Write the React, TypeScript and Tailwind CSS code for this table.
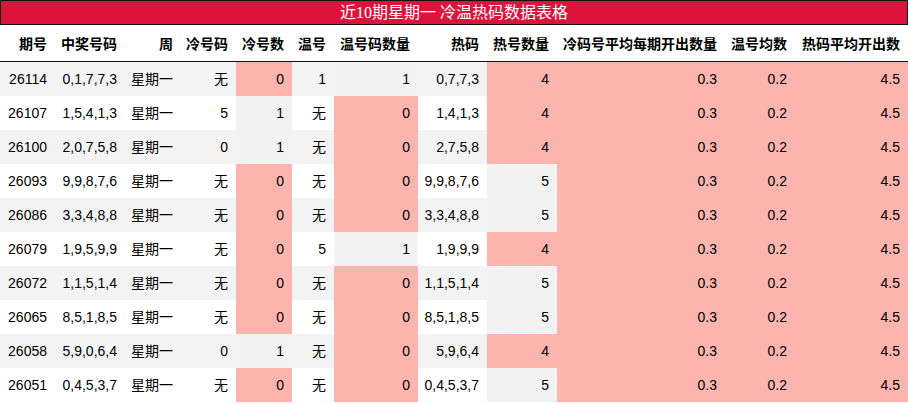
import React from "react";

const cols =
  "grid grid-cols-[55px_70px_56px_55px_56px_42px_84px_69px_70px_168px_70px_113px]";

const headers = [
  "期号",
  "中奖号码",
  "周",
  "冷号码",
  "冷号数",
  "温号",
  "温号码数量",
  "热码",
  "热号数量",
  "冷码号平均每期开出数量",
  "温号均数",
  "热码平均开出数",
];

const rows: string[][] = [
  ["26114", "0,1,7,7,3", "无", "0", "1", "1", "0,7,7,3", "4"],
  ["26107", "1,5,4,1,3", "5", "1", "无", "0", "1,4,1,3", "4"],
  ["26100", "2,0,7,5,8", "0", "1", "无", "0", "2,7,5,8", "4"],
  ["26093", "9,9,8,7,6", "无", "0", "无", "0", "9,9,8,7,6", "5"],
  ["26086", "3,3,4,8,8", "无", "0", "无", "0", "3,3,4,8,8", "5"],
  ["26079", "1,9,5,9,9", "无", "0", "5", "1", "1,9,9,9", "4"],
  ["26072", "1,1,5,1,4", "无", "0", "无", "0", "1,1,5,1,4", "5"],
  ["26065", "8,5,1,8,5", "无", "0", "无", "0", "8,5,1,8,5", "5"],
  ["26058", "5,9,0,6,4", "0", "1", "无", "0", "5,9,6,4", "4"],
  ["26051", "0,4,5,3,7", "无", "0", "无", "0", "0,4,5,3,7", "5"],
];

const PINK = "bg-[#fbb4ae]";
const GRAY = "bg-[#f2f2f2]";

function Cell({ children, bg }: { children: React.ReactNode; bg?: string }) {
  return (
    <div className={`h-[34px] flex items-center justify-end pr-2 ${bg ?? ""}`}>
      {children}
    </div>
  );
}

export default function App() {
  return (
    <div className="w-[908px] h-[403px] bg-white text-black font-['Liberation_Sans','Noto_Sans_CJK_SC',sans-serif] text-[14px]">
      <div className="h-[25px] bg-[#dc143c] border border-[#111] flex items-center justify-center text-white text-[16px] font-['Liberation_Serif','Noto_Sans_CJK_SC',serif] leading-none">
        近10期星期一 冷温热码数据表格
      </div>
      <div className={`${cols} h-[37px] border-b border-[#111] font-bold font-['Noto_Sans_CJK_SC',sans-serif]`}>
        {headers.map((h) => (
          <div key={h} className="flex items-center justify-end pr-2 whitespace-nowrap">
            {h}
          </div>
        ))}
      </div>
      <div>
        {rows.map((r, i) => {
          const rowBg = i % 2 === 0 ? "bg-[#f3f3f3]" : "bg-white";
          return (
            <div key={r[0]} className={`${cols} ${rowBg}`}>
              <Cell>{r[0]}</Cell>
              <Cell>{r[1]}</Cell>
              <Cell>星期一</Cell>
              <Cell>{r[2]}</Cell>
              <Cell bg={r[3] === "0" ? PINK : GRAY}>{r[3]}</Cell>
              <Cell>{r[4]}</Cell>
              <Cell bg={r[5] === "0" ? PINK : GRAY}>{r[5]}</Cell>
              <Cell>{r[6]}</Cell>
              <Cell bg={r[7] === "4" ? PINK : GRAY}>{r[7]}</Cell>
              <Cell bg={PINK}>0.3</Cell>
              <Cell bg={PINK}>0.2</Cell>
              <Cell bg={PINK}>4.5</Cell>
            </div>
          );
        })}
      </div>
    </div>
  );
}
